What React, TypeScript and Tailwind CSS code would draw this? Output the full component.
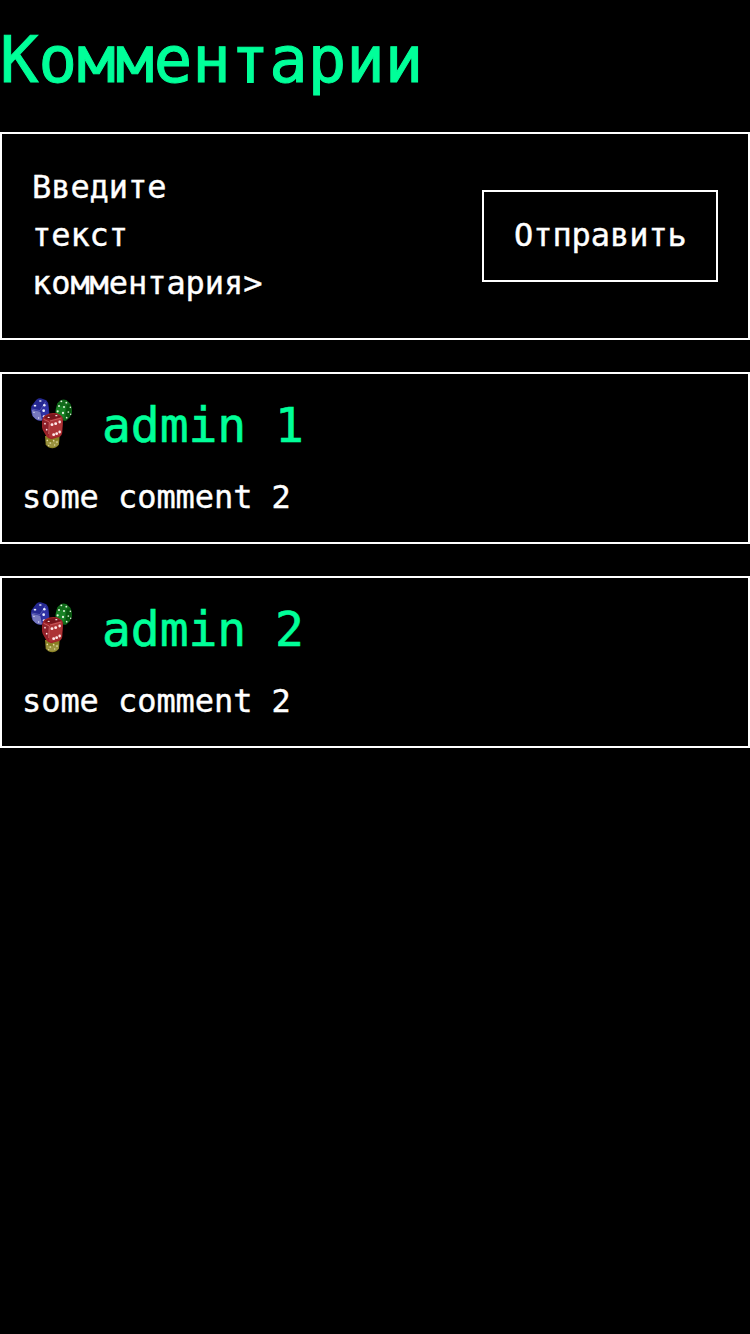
import React from "react";

const comments = [
  { author: "admin 1", text: "some comment 2" },
  { author: "admin 2", text: "some comment 2" },
];

function DiceAvatar() {
  return (
    <svg className="h-16 w-[60px] shrink-0" viewBox="6 12 180 192" aria-hidden="true">
      {/* yellow die */}
      <path d="M75 138 L119 136 L117 162 Q114 172 98 175 Q83 175 77 163 Z" fill="#898024" />
      <path d="M78 153 L96 157 L115 150 L116 164 Q98 179 80 166 Z" fill="#9b9340" />
      <g fill="#e4dda6">
        <circle cx="82" cy="151" r="2.6" /><circle cx="91" cy="159" r="2.6" />
        <circle cx="101" cy="152" r="2.6" /><circle cx="111" cy="156" r="2.6" />
        <circle cx="86" cy="167" r="2" /><circle cx="104" cy="165" r="2" />
      </g>
      {/* blue die */}
      <path d="M49 29 Q58 22 69 27 L79 31 Q85 37 86 48 L88 68 Q87 79 79 84 L65 92 Q55 94 47 88 L38 79 Q33 70 33 59 L34 49 Z" fill="#252891" />
      <path d="M35 59 L61 65 L66 91 Q54 93 46 86 L38 78 Z" fill="#7779be" />
      <path d="M63 59 L78 38 Q84 43 85 54 L86 68 Q85 78 78 84 L67 90 Z" fill="#3032a4" />
      <path d="M35 57 L60 62 L77 35" fill="none" stroke="#5557b4" strokeWidth="3" />
      <g fill="#edf0ff">
        <ellipse cx="61" cy="33" rx="4" ry="2.5" /><ellipse cx="45" cy="47" rx="4" ry="2.5" />
        <circle cx="73" cy="46" r="3.8" /><circle cx="71" cy="62" r="4" />
        <circle cx="72" cy="79" r="3.6" /><circle cx="42" cy="67" r="2" />
        <circle cx="56" cy="84" r="2" />
      </g>
      {/* green die */}
      <path d="M122 31 Q130 26 140 31 L151 41 Q157 50 156 66 Q155 75 148 83 L138 92 Q131 94 124 88 L110 76 Q104 68 108 54 L112 40 Z" fill="#116b1b" />
      <path d="M112 49 L137 48 L133 83 L124 84 L109 72 Q105 66 112 49Z" fill="#188225" />
      <path d="M140 45 L150 43 Q156 53 155 67 L149 79 L137 90 Z" fill="#08570f" />
      <g fill="#e2f4de">
        <circle cx="124" cy="34" r="2.8" /><circle cx="139" cy="38" r="2.8" />
        <circle cx="117" cy="48" r="3" /><circle cx="132" cy="51" r="3" />
        <circle cx="113" cy="64" r="3.3" /><circle cx="129" cy="69" r="3.4" />
        <circle cx="151" cy="52" r="2.4" /><circle cx="145" cy="66" r="2.6" />
        <circle cx="152" cy="73" r="2.2" /><circle cx="140" cy="83" r="2.6" />
      </g>
      {/* red die */}
      <path d="M76 76 Q91 66 111 70 L122 76 Q130 81 129 93 L127 125 Q127 136 117 141 L96 147 Q86 149 79 139 L68 119 Q65 112 66 96 Q67 81 76 76 Z" fill="#a12329" />
      <path d="M73 84 Q82 70 108 73 L124 80 L94 89 Z" fill="#76151c" />
      <path d="M90 95 Q105 88 125 84 Q128 89 127 103 L125 127 Q124 135 115 138 L93 143 Q86 142 86 132 Z" fill="#ad3436" />
      <path d="M70 89 L87 98 L86 138 L71 118 Q65 106 70 89Z" fill="#8d202a" />
      <path d="M71 88 L88 96 L86 132 M90 93 L124 84" fill="none" stroke="#cb6668" strokeWidth="2.5" />
      <g fill="#ffe9e9">
        <ellipse cx="96" cy="104" rx="4.4" ry="4" /><ellipse cx="107" cy="101" rx="4.4" ry="4" />
        <ellipse cx="119" cy="96" rx="3.8" ry="4.4" /><ellipse cx="101" cy="134" rx="4.4" ry="4" />
        <ellipse cx="110" cy="131" rx="4.2" ry="4" /><ellipse cx="119" cy="126" rx="3.8" ry="4.4" />
        <circle cx="75" cy="101" r="2.5" /><circle cx="80" cy="119" r="2.5" />
        <ellipse cx="86" cy="82" rx="3.5" ry="2" /><ellipse cx="109" cy="77" rx="3.5" ry="2" />
      </g>
    </svg>
  );
}

export default function App() {
  return (
    <main className="flex min-h-screen flex-col bg-black font-['DejaVu_Sans_Mono','Liberation_Mono',monospace] text-[32px] leading-[48px] tracking-[-0.002em] text-white [-webkit-text-stroke:0.4px_currentColor]">
      <h1 className="h-[132px] pt-3 text-[64px] leading-[96px] text-[#00ff99] [-webkit-text-stroke:1px_currentColor]">Комментарии</h1>
      <section className="flex flex-col gap-8">
        <form className="flex items-center justify-between border-2 border-white p-[30px]">
          <label className="-mt-px mb-px w-[232px]">Введите текст комментария&gt;</label>
          <button type="button" className="w-[236px] whitespace-nowrap border-2 border-white pt-[19px] pb-[21px] pl-[30px] text-left">
            Отправить
          </button>
        </form>
        {comments.map((comment) => (
          <article key={comment.author} className="flex flex-col gap-4 border-2 border-white p-5">
            <header className="flex items-center gap-5">
              <DiceAvatar />
              <h2 className="-mt-px mb-px text-[48px] leading-[64px] text-[#00ff99] [-webkit-text-stroke:0.6px_currentColor]">{comment.author}</h2>
            </header>
            <p className="-mt-px mb-px">{comment.text}</p>
          </article>
        ))}
      </section>
    </main>
  );
}
